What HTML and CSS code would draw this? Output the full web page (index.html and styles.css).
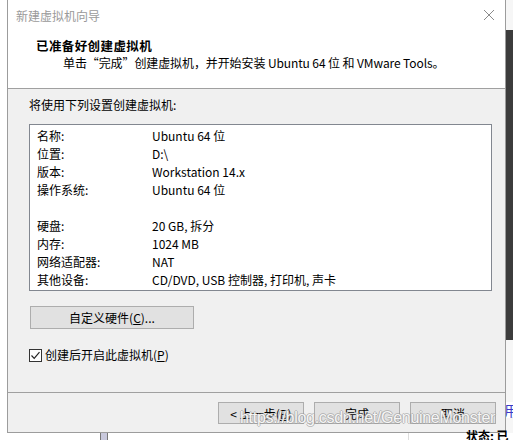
FILE: index.html
```html
<!DOCTYPE html>
<html lang="zh-CN">
<head>
<meta charset="utf-8">
<title>新建虚拟机向导</title>
<link rel="stylesheet" href="styles.css">
</head>
<body>
<div class="desktop">
  <div class="left-gap"></div>
  <div class="window">
    <div class="titlebar">
      <span class="title">新建虚拟机向导</span>
      <svg class="close" width="12" height="12" viewBox="0 0 12 12"><path d="M1 1 L11 11 M11 1 L1 11" stroke="#8a8a8a" stroke-width="1" fill="none"/></svg>
    </div>
    <div class="header">
      <div class="h-title">已准备好创建虚拟机</div>
      <div class="h-sub">单击“完成”创建虚拟机，并开始安装 Ubuntu 64 位 和 VMware Tools。</div>
    </div>
    <div class="body">
      <div class="intro">将使用下列设置创建虚拟机:</div>
      <div class="summary">
        <div class="row"><span class="k">名称:</span><span class="v">Ubuntu 64 位</span></div>
        <div class="row"><span class="k">位置:</span><span class="v">D:\</span></div>
        <div class="row"><span class="k">版本:</span><span class="v">Workstation 14.x</span></div>
        <div class="row"><span class="k">操作系统:</span><span class="v">Ubuntu 64 位</span></div>
        <div class="row blank"></div>
        <div class="row"><span class="k">硬盘:</span><span class="v">20 GB, 拆分</span></div>
        <div class="row"><span class="k">内存:</span><span class="v">1024 MB</span></div>
        <div class="row"><span class="k">网络适配器:</span><span class="v">NAT</span></div>
        <div class="row"><span class="k">其他设备:</span><span class="v">CD/DVD, USB 控制器, 打印机, 声卡</span></div>
      </div>
      <button class="btn custom">自定义硬件(<u>C</u>)...</button>
      <label class="check">
        <span class="box"><svg width="11" height="11" viewBox="0 0 11 11"><path d="M1.5 5.5 L4.2 8.3 L9.5 2.2" stroke="#222" stroke-width="1.2" fill="none"/></svg></span>
        <span>创建后开启此虚拟机(<u>P</u>)</span>
      </label>
    </div>
    <div class="footer">
      <button class="btn fbtn">&lt; 上一步(<u>B</u>)</button>
      <button class="btn fbtn">完成</button>
      <button class="btn fbtn">取消</button>
      <div class="watermark">https://blog.csdn.net/GenuineMonster</div>
    </div>
  </div>
  <div class="right-strip">
    <div class="dark"></div>
    <div class="peek">用</div>
  </div>
</div>
<div class="below">
  <div class="b-block"></div>
  <div class="b-line"></div>
  <div class="b-text">状态: 已</div>
</div>
</body>
</html>
```
FILE: styles.css
```css
html, body {
  margin: 0;
  padding: 0;
  background: #ffffff;
  width: 513px;
  height: 440px;
  overflow: hidden;
  font-family: "Noto Sans CJK SC", "Noto Sans", sans-serif;
  font-size: 12px;
  color: #000;
}
.desktop {
  display: flex;
  height: 433px;
}
.left-gap {
  width: 7px;
  background: #ffffff;
}
.window {
  position: relative;
  width: 497px;
  height: 432px;
  border-left: 1px solid #9c9c9c;
  border-right: 1px solid #9c9c9c;
  border-bottom: 1px solid #9c9c9c;
  display: flex;
  flex-direction: column;
  background: #f0f0f0;
}
.right-strip {
  flex: 1;
  overflow: hidden;
  padding-top: 30px;
  background: #f6f6f6;
  display: flex;
  flex-direction: column;
}
.dark {
  height: 310px;
  background: #3c3c3c;
}
.peek {
  margin-top: 62px;
  margin-left: -2px;
  color: #3a3ac8;
  font-size: 14px;
  line-height: 16px;
  background: #fff;
}
.titlebar {
  height: 30px;
  background: #fff;
  display: flex;
  align-items: center;
  justify-content: space-between;
  padding: 0 10px 0 8px;
}
.title {
  color: #9a9a9a;
  font-size: 12px;
}
.close { display: block; }
.header {
  background: #fff;
  border-bottom: 1px solid #a0a0a0;
  padding-left: 28px;
  padding-top: 7px;
  box-sizing: border-box;
  height: 59px;
}
.h-title {
  font-weight: bold;
  font-size: 12.5px;
  letter-spacing: 0.4px;
  line-height: 17px;
}
.h-sub {
  padding-left: 27px;
  line-height: 17px;
  letter-spacing: -0.1px;
}
.body {
  flex: 1;
  padding: 7px 13px 0 21px;
  display: flex;
  flex-direction: column;
  align-items: flex-start;
  border-bottom: 1px solid #a0a0a0;
}
.intro {
  line-height: 18px;
}
.summary {
  margin-top: 10px;
  align-self: stretch;
  background: #fff;
  border: 1px solid #828790;
  padding: 2px 0 1px 7px;
}
.row {
  display: flex;
  height: 18px;
  line-height: 18px;
}
.k { width: 115px; }
.btn {
  font-family: inherit;
  font-size: 12px;
  color: #000;
  background: #e1e1e1;
  border: 1px solid #adadad;
  padding: 0;
  margin: 0;
}
.btn u { text-decoration: underline; }
.custom {
  margin-top: 15px;
  margin-left: 1px;
  width: 164px;
  height: 23px;
}
.check {
  margin-top: 18px;
  display: flex;
  align-items: center;
  gap: 3px;
  line-height: 16px;
}
.box {
  width: 11px;
  height: 11px;
  border: 1px solid #333;
  background: #fff;
  display: flex;
}
.footer {
  position: relative;
  height: 39px;
  display: flex;
  justify-content: flex-end;
  gap: 10px;
  padding: 9px 9px 0 0;
  box-sizing: border-box;
}
.fbtn {
  width: 86px;
  height: 22px;
}
.watermark {
  position: absolute;
  left: 232px;
  top: 16px;
  font-family: "Liberation Sans", Arial, sans-serif;
  font-size: 16px;
  letter-spacing: -0.3px;
  line-height: 18px;
  color: rgba(255,255,255,0.92);
  text-shadow: 1px 0 0 rgba(150,150,150,0.55), -1px 0 0 rgba(150,150,150,0.55), 0 1px 0 rgba(150,150,150,0.55), 0 -1px 0 rgba(150,150,150,0.55);
  white-space: nowrap;
  pointer-events: none;
}
.below {
  position: relative;
  height: 7px;
}
.b-block {
  position: absolute;
  left: 100px;
  top: 0;
  width: 6px;
  height: 7px;
  background: #c8c8dc;
  border-left: 1px solid #777;
  border-right: 1px solid #777;
}
.b-line {
  position: absolute;
  left: 408px;
  top: 0;
  width: 1px;
  height: 7px;
  background: #ddd;
}
.b-text {
  position: absolute;
  left: 466px;
  top: -4px;
  font-size: 12px;
  font-weight: bold;
  line-height: 14px;
}
```
